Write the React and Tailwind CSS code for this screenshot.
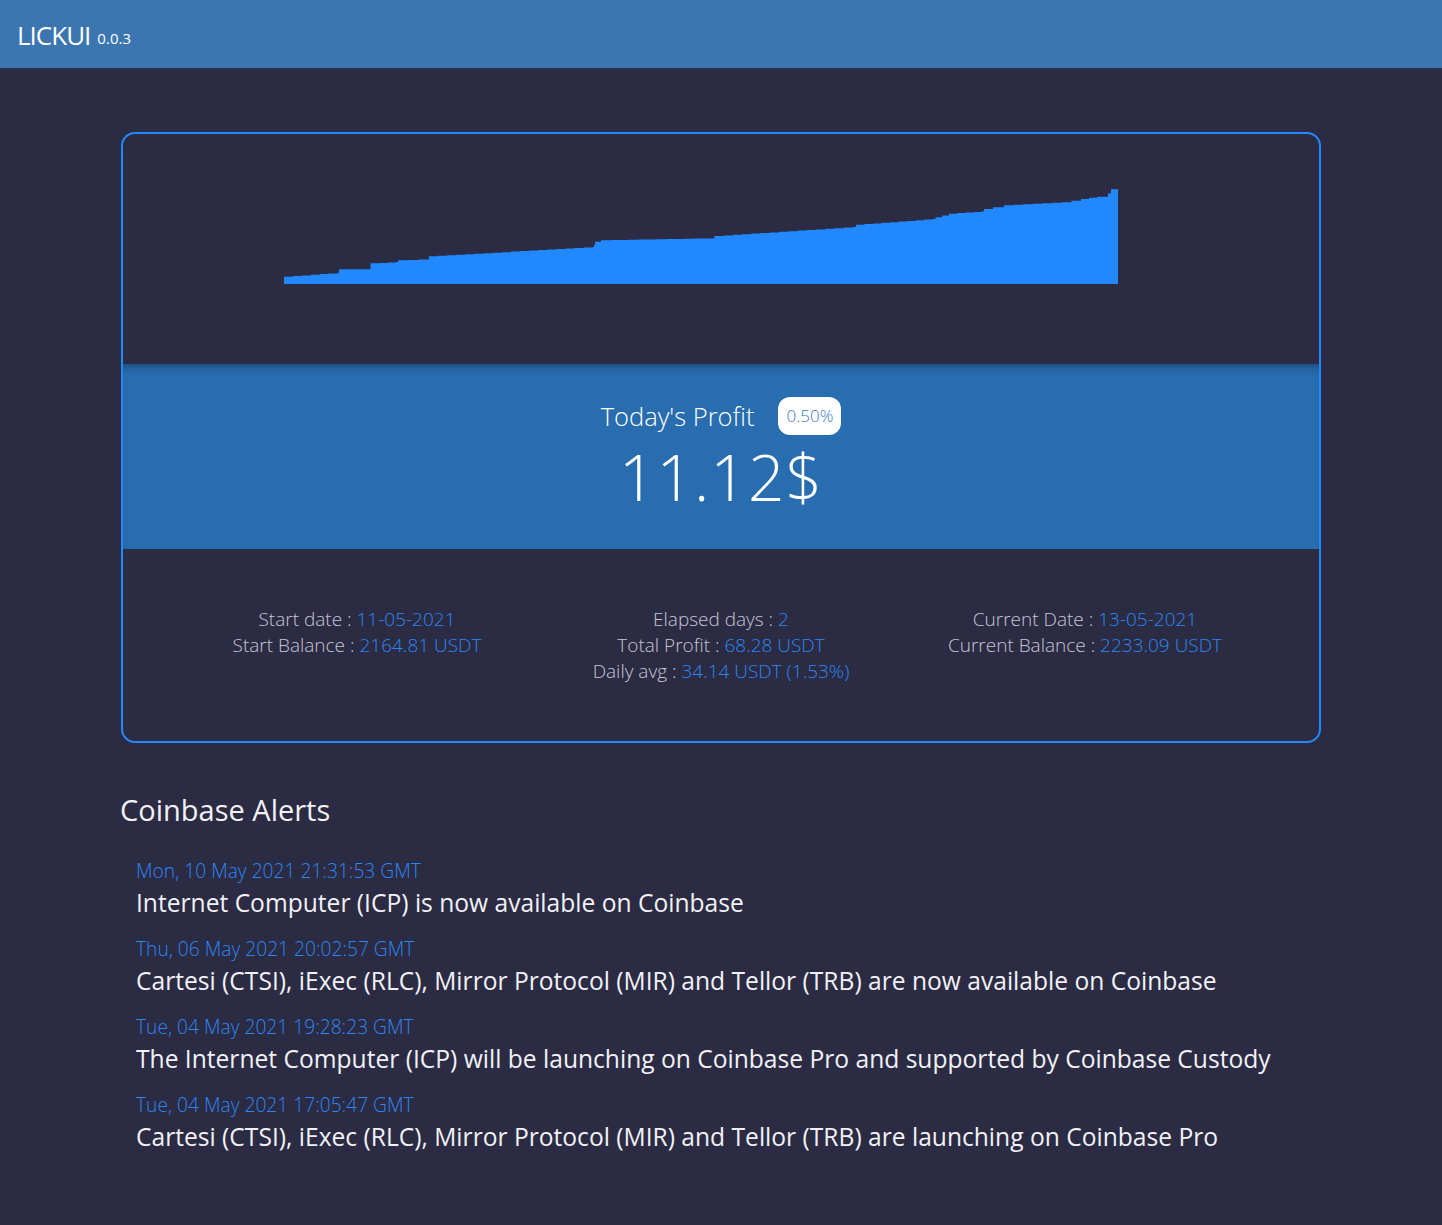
import React from "react";

const RAW = [
  [0, 88.7], [53.6, 84.7], [55, 81.3], [86.5, 81.3], [86.5, 75.3], [112, 74], [114, 72.3],
  [145, 71.3], [145, 68.3], [308.6, 59], [310, 57], [311, 53.7], [317, 52.3], [429, 50.3],
  [430.4, 48], [569, 39], [572, 36.7], [648.7, 31], [651.5, 29.3], [665, 25.7], [698, 23.3],
  [700, 21], [709, 19.3], [720, 17.3], [777.6, 14.3], [797, 11], [813, 8.7], [821.5, 8.7], [824, 5.3],
  [827, 1.3], [834, 0.3],
];

function buildPoints() {
  const pts = [[0, 96]];
  for (let i = 0; i < RAW.length; i++) {
    const [x, y] = RAW[i];
    if (i === 0) {
      pts.push([x, y]);
      continue;
    }
    const [px, py] = RAW[i - 1];
    const dx = x - px;
    if (dx > 12) {
      const n = Math.round(dx / 9);
      for (let k = 1; k <= n; k++) {
        const nx = px + (dx * k) / n;
        const ny = py + ((y - py) * k) / n;
        pts.push([nx, pts[pts.length - 1][1]]);
        pts.push([nx, ny]);
      }
    } else {
      pts.push([x, pts[pts.length - 1][1]]);
      pts.push([x, y]);
    }
  }
  pts.push([834, 96]);
  return pts.map(([x, y]) => `${x.toFixed(1)},${y.toFixed(1)}`).join(" ");
}

const POINTS = buildPoints();

const alerts = [
  ["Mon, 10 May 2021 21:31:53 GMT", "Internet Computer (ICP) is now available on Coinbase"],
  ["Thu, 06 May 2021 20:02:57 GMT", "Cartesi (CTSI), iExec (RLC), Mirror Protocol (MIR) and Tellor (TRB) are now available on Coinbase"],
  ["Tue, 04 May 2021 19:28:23 GMT", "The Internet Computer (ICP) will be launching on Coinbase Pro and supported by Coinbase Custody"],
  ["Tue, 04 May 2021 17:05:47 GMT", "Cartesi (CTSI), iExec (RLC), Mirror Protocol (MIR) and Tellor (TRB) are launching on Coinbase Pro"],
];

function Stat({ label, value }) {
  return (
    <div>
      <span className="text-[#c6c7d6]">{label} : </span>
      <span className="text-[#2b87f2]">{value}</span>
    </div>
  );
}

export default function App() {
  return (
    <div
      className="min-h-[1225px] bg-[#2b2b43] text-white"
      style={{ fontFamily: '"Open Sans", "Noto Sans", sans-serif' }}
    >
      <header className="h-[68px] bg-[#3b76b0] flex items-center pl-[17px] pt-[2px]">
        <span className="text-[26px] tracking-[-1px] font-normal">LICKUI</span>
        <span className="text-[15px] ml-[7px] mt-[6px]">0.0.3</span>
      </header>

      <main className="w-[1200px] mx-auto pt-[64px]">
        <section className="border-2 border-[#2188ff] rounded-[14px] overflow-hidden">
          <div className="h-[230px] pt-[54px] pl-[161px]">
            <svg width="834" height="96" viewBox="0 0 834 96" className="block">
              <polygon points={POINTS} fill="#2188ff" />
            </svg>
          </div>

          <div className="h-[185px] bg-[#286db0] shadow-[inset_0_9px_8px_-6px_rgba(20,40,80,0.55)] flex flex-col items-center pt-[33px]">
            <div className="flex items-center">
              <span className="text-[25.5px] font-light leading-[36px]">Today's Profit</span>
              <span className="ml-[24px] h-[38px] px-[8px] bg-white rounded-[12px] text-[#3a7bc2] text-[17px] font-light flex items-center">
                0.50%
              </span>
            </div>
            <div className="text-[64px] font-light leading-[72px] mt-[6px] tracking-[1px]">11.12$</div>
          </div>

          <div className="grid grid-cols-3 px-[52px] pt-[57px] pb-[57px] text-[19px] leading-[26px] font-light text-center">
            <div>
              <Stat label="Start date" value="11-05-2021" />
              <Stat label="Start Balance" value="2164.81 USDT" />
            </div>
            <div>
              <Stat label="Elapsed days" value="2" />
              <Stat label="Total Profit" value="68.28 USDT" />
              <Stat label="Daily avg" value="34.14 USDT (1.53%)" />
            </div>
            <div>
              <Stat label="Current Date" value="13-05-2021" />
              <Stat label="Current Balance" value="2233.09 USDT" />
            </div>
          </div>
        </section>

        <h2 className="mt-[48px] text-[29px] leading-[38px] font-normal text-[#f2f2f6] -ml-[1px]">Coinbase Alerts</h2>

        <ul className="mt-[29px] pl-[15px] flex flex-col gap-[14px]">
          {alerts.map(([d, t]) => (
            <li key={d}>
              <div className="text-[19.2px] leading-[26px] font-light text-[#2b87f2]">{d}</div>
              <div className="text-[24.6px] leading-[38px] text-[#f2f2f6]">{t}</div>
            </li>
          ))}
        </ul>
      </main>
    </div>
  );
}
